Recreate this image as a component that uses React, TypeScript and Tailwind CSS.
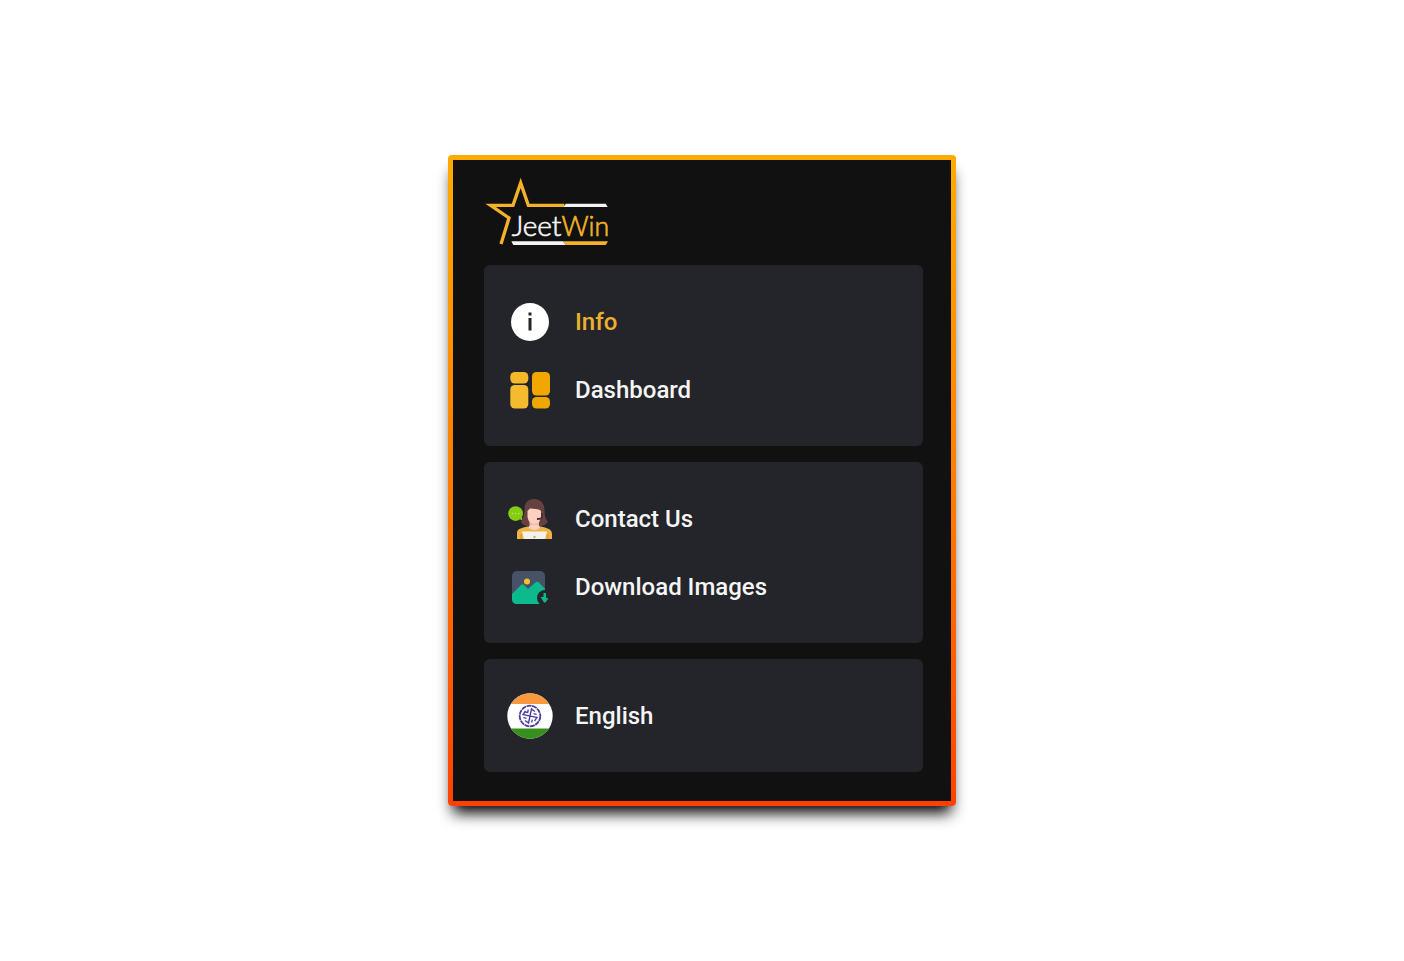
import React from "react";

function Logo() {
  return (
    <svg viewBox="42 36 372 207" className="h-[69px] w-[124px]" role="img" aria-label="JeetWin">
      <path
        d="M283 121H175L152 54L129 121H62L117 159L93 237"
        fill="none"
        stroke="#f3b229"
        strokeWidth="10"
        strokeMiterlimit="10"
      />
      <path d="M287 116H407L413 126H281Z" fill="#f4f4f4" />
      <path d="M124 229H279L288 240H130Z" fill="#f4f4f4" />
      <path d="M279 229H414L407 240H288Z" fill="#f3b229" />
      <text
        x="125"
        y="214"
        fontSize="84"
        strokeWidth="2"
        className="font-['Lato',sans-serif] font-light"
        fill="#f4f4f4"
        stroke="#f4f4f4"
      >
        Jeet
        <tspan fontSize="80" fill="#f3b229" stroke="#f3b229">Win</tspan>
      </text>
    </svg>
  );
}

function InfoIcon() {
  return (
    <svg viewBox="0 0 46 46" className="h-[46px] w-[46px]" aria-hidden="true">
      <circle cx="23" cy="23" r="19" fill="#fff" />
      <rect x="21.5" y="13.5" width="3" height="3" fill="#24252b" />
      <rect x="21.5" y="19" width="3" height="12.5" fill="#24252b" />
    </svg>
  );
}

function DashboardIcon() {
  return (
    <svg viewBox="0 0 46 46" className="h-[46px] w-[46px]" aria-hidden="true">
      <rect x="3.3" y="5" width="18" height="11.5" rx="4.5" fill="#f4b92b" />
      <rect x="3.3" y="18" width="18" height="23.5" rx="4.5" fill="#f4bb2e" />
      <rect x="25" y="5" width="18" height="23.5" rx="4.5" fill="#f0a800" />
      <rect x="25" y="30" width="18" height="11.5" rx="4.5" fill="#f0a800" />
    </svg>
  );
}

function ContactIcon() {
  return (
    <svg viewBox="0 0 46 46" className="h-[46px] w-[46px]" aria-hidden="true">
      <circle cx="8.6" cy="17.6" r="7.4" fill="#84cc16" />
      <path d="M11 22L16 25L14 19Z" fill="#84cc16" />
      <circle cx="5.5" cy="17.6" r="0.8" fill="#b9ea62" />
      <circle cx="8.6" cy="17.6" r="0.8" fill="#b9ea62" />
      <circle cx="11.7" cy="17.6" r="0.8" fill="#b9ea62" />
      <path
        d="M27 3C19.5 3 17.5 8 17.5 14C17.5 19 16 22 14 26C16 30 22 31 27 31S38 30 41 26C38 22 37.5 19 37.5 14C37.5 8 34.5 3 27 3Z"
        fill="#67413f"
      />
      <path d="M22.5 23H32V33L27 36L22.5 33Z" fill="#f2b6a6" />
      <path d="M20.5 15C22 14 22 12 24 12.5C27 13.5 31 12 34 15V20C34 25 31 28 27.5 28S20.5 25 20.5 20Z" fill="#fbd0c0" />
      <path d="M35 17V21C35 22.5 33 23 30 23" fill="none" stroke="#4b2c34" strokeWidth="1.8" />
      <path d="M10 43V37C10 33 14 32 21 30.5C24 34 31 34 33.5 30.5C40 32 45 33 45 38V43Z" fill="#efb544" />
      <path d="M21 31C24 35 31 35 33.5 31L31 29H24Z" fill="#fbd0c0" />
      <path d="M15 35.5H40L38 43H17Z" fill="#f5f1eb" />
      <path d="M14 38V43M41 38V43" stroke="#d99b3b" strokeWidth="1.2" />
      <circle cx="27.5" cy="41" r="1.2" fill="#b9aaa5" />
    </svg>
  );
}

function ImagesIcon() {
  return (
    <svg viewBox="0 0 46 46" className="h-[46px] w-[46px]" aria-hidden="true">
      <rect x="5" y="7" width="33" height="33" rx="5" fill="#475267" />
      <path d="M5 30L14 21C15 20 16 20 17 21L21 25L29 18C30 17.5 31 17.5 32 18.5L38 25V35C38 38 36 40 33 40H10C7 40 5 38 5 35Z" fill="#0cba8d" />
      <circle cx="20" cy="17.5" r="3" fill="#fbbf24" />
      <circle cx="38" cy="34" r="8" fill="#24252b" />
      <path d="M36.5 29V33H33.5L37 38.5H38.5L41.5 34H39V29Z" fill="#0cba8d" />
    </svg>
  );
}

function FlagIcon() {
  return (
    <svg viewBox="0 0 46 46" className="h-[46px] w-[46px]" aria-hidden="true">
      <clipPath id="flag-round">
        <circle cx="23" cy="23" r="22.7" />
      </clipPath>
      <g clipPath="url(#flag-round)">
        <rect width="46" height="46" fill="#fff" />
        <rect width="46" height="11" fill="#f8983f" />
        <rect y="35.5" width="46" height="10.5" fill="#36901b" />
      </g>
      <g fill="none" stroke="#4a3aa0">
        <circle cx="23" cy="23" r="10.3" strokeWidth="1.8" strokeDasharray="5 0.6" />
        <g transform="rotate(12 23 23)">
          <path d="M23 15V31M15 23H31" strokeWidth="1.4" />
          <path d="M23 16L27 17.5M30 23L28.5 27M23 30L19 28.500M16 23L17.5 19M20 17V20H17M29 20H26M26 29V26M17 26H20" strokeWidth="1.3" />
        </g>
      </g>
    </svg>
  );
}

const groups = [
  [
    { label: "Info", icon: <InfoIcon />, active: true },
    { label: "Dashboard", icon: <DashboardIcon /> },
  ],
  [
    { label: "Contact Us", icon: <ContactIcon /> },
    { label: "Download Images", icon: <ImagesIcon /> },
  ],
  [{ label: "English", icon: <FlagIcon /> }],
];

export default function App() {
  return (
    <main className="flex min-h-screen items-center justify-center bg-white font-['Roboto',sans-serif]">
      <div className="w-full max-w-[508px] rounded bg-linear-to-b from-[#ffab00] to-[#ff4000] p-[5px] shadow-[0_12px_14px_-5px_#000]">
        <div className="bg-[#111111] pt-[17px] pr-7 pb-[29px] pl-[31px]">
          <a href="#" className="mb-[19px] inline-block align-top">
            <Logo />
          </a>
          <nav className="flex flex-col gap-4">
            {groups.map((items, i) => (
              <ul key={i} className="rounded-md bg-[#24252b] px-[23px] pt-[23px] pb-[22px]">
                {items.map((item) => (
                  <li key={item.label}>
                    <a
                      href="#"
                      className={
                        item.active
                          ? "flex h-[68px] items-center gap-[22px] text-2xl font-medium text-[#eeb02c]"
                          : "flex h-[68px] items-center gap-[22px] text-2xl font-medium text-[#f5f5f5]"
                      }
                    >
                      {item.icon}
                      {item.label}
                    </a>
                  </li>
                ))}
              </ul>
            ))}
          </nav>
        </div>
      </div>
    </main>
  );
}
